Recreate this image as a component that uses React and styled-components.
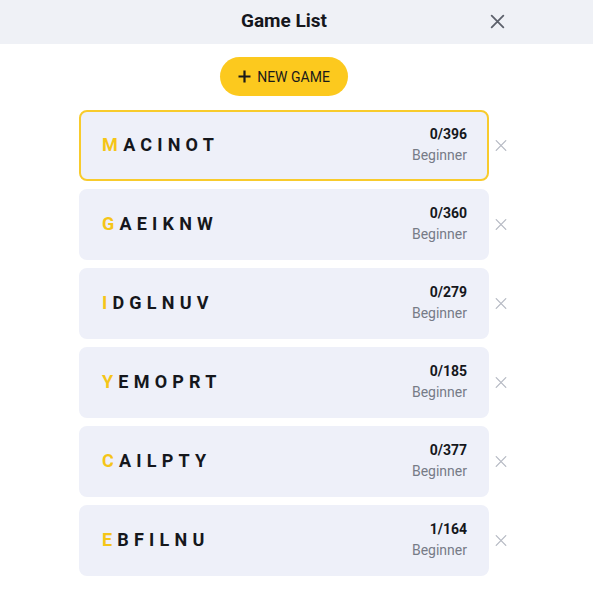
import React from "react";
import styled, { createGlobalStyle } from "styled-components";

const Global = createGlobalStyle`
  html, body { margin: 0; padding: 0; background: #fff; }
  body { font-family: Roboto, "Noto Sans", sans-serif; }
`;

const Page = styled.div`
  width: 593px;
  min-height: 592px;
  background: #fff;
`;

const Header = styled.header`
  height: 44px;
  background: #eff1f6;
`;

const HeaderInner = styled.div`
  width: 568px;
  height: 100%;
  display: flex;
  align-items: center;
  justify-content: center;
  position: relative;
`;

const Title = styled.h1`
  margin: 0;
  font-size: 19px;
  font-weight: 700;
  color: #15171c;
  transform: translateY(-2px);
`;

const CloseButton = styled.button`
  position: absolute;
  left: 487px;
  top: 11px;
  width: 20px;
  height: 20px;
  padding: 0;
  border: none;
  background: none;
  display: flex;
  align-items: center;
  justify-content: center;
  color: #5c606b;
`;

const Body = styled.main`
  width: 568px;
  display: flex;
  flex-direction: column;
  align-items: center;
  padding-top: 13px;
`;

const NewGameButton = styled.button`
  height: 39px;
  width: 128px;
  border: none;
  border-radius: 20px;
  background: #fcc91e;
  display: flex;
  align-items: center;
  justify-content: center;
  gap: 6px;
  font-family: Roboto, sans-serif;
  font-size: 14px;
  color: #1a1a1a;
  padding: 0;
`;

const List = styled.ul`
  list-style: none;
  margin: 14px 0 0 0;
  padding: 0 0 0 79px;
  align-self: stretch;
  display: flex;
  flex-direction: column;
  gap: 8px;
`;

const Row = styled.li`
  display: flex;
  align-items: center;
  gap: 5px;
`;

const Card = styled.div`
  width: 410px;
  height: 71px;
  box-sizing: border-box;
  border-radius: 8px;
  background: #eef0f9;
  border: 2px solid ${(p) => (p.$active ? "#f8cb2c" : "#eef0f9")};
  display: flex;
  align-items: center;
  justify-content: space-between;
  padding: 0 20px 0 21px;
`;

const Letters = styled.div`
  font-size: 18px;
  font-weight: 700;
  letter-spacing: 5.2px;
  color: #15171c;
  margin-top: -3px;
`;

const Center = styled.span`
  color: #f5c518;
`;

const Stats = styled.div`
  display: flex;
  flex-direction: column;
  align-items: flex-end;
  gap: 5px;
  margin-top: -3px;
`;

const Score = styled.div`
  font-size: 14px;
  font-weight: 700;
  color: #15171c;
`;

const Level = styled.div`
  font-size: 14px;
  color: #767b87;
`;

const RemoveButton = styled.button`
  width: 14px;
  height: 14px;
  border: none;
  background: none;
  padding: 0;
  display: flex;
  align-items: center;
  justify-content: center;
  color: #b4b8c2;
`;

const XIcon = ({ size = 16, w = 1.6 }) => (
  <svg width={size} height={size} viewBox="0 0 16 16" fill="none" stroke="currentColor" strokeWidth={w} strokeLinecap="round">
    <path d="M2.5 2.5 L13.5 13.5 M13.5 2.5 L2.5 13.5" />
  </svg>
);

const games = [
  { letters: "MACINOT", score: "0/396" },
  { letters: "GAEIKNW", score: "0/360" },
  { letters: "IDGLNUV", score: "0/279" },
  { letters: "YEMOPRT", score: "0/185" },
  { letters: "CAILPTY", score: "0/377" },
  { letters: "EBFILNU", score: "1/164" },
];

export default function App() {
  return (
    <Page>
      <Global />
      <Header>
        <HeaderInner>
          <Title>Game List</Title>
          <CloseButton aria-label="close">
            <XIcon size={17} w={1.7} />
          </CloseButton>
        </HeaderInner>
      </Header>
      <Body>
        <NewGameButton>
          <svg width="13" height="13" viewBox="0 0 13 13" stroke="#1a1a1a" strokeWidth="2.2">
            <path d="M6.5 0.5 V12.5 M0.5 6.5 H12.5" />
          </svg>
          NEW GAME
        </NewGameButton>
        <List>
          {games.map((g, i) => (
            <Row key={g.letters}>
              <Card $active={i === 0}>
                <Letters>
                  <Center>{g.letters[0]}</Center>
                  {g.letters.slice(1)}
                </Letters>
                <Stats>
                  <Score>{g.score}</Score>
                  <Level>Beginner</Level>
                </Stats>
              </Card>
              <RemoveButton aria-label="remove">
                <XIcon size={15} w={1.4} />
              </RemoveButton>
            </Row>
          ))}
        </List>
      </Body>
    </Page>
  );
}
